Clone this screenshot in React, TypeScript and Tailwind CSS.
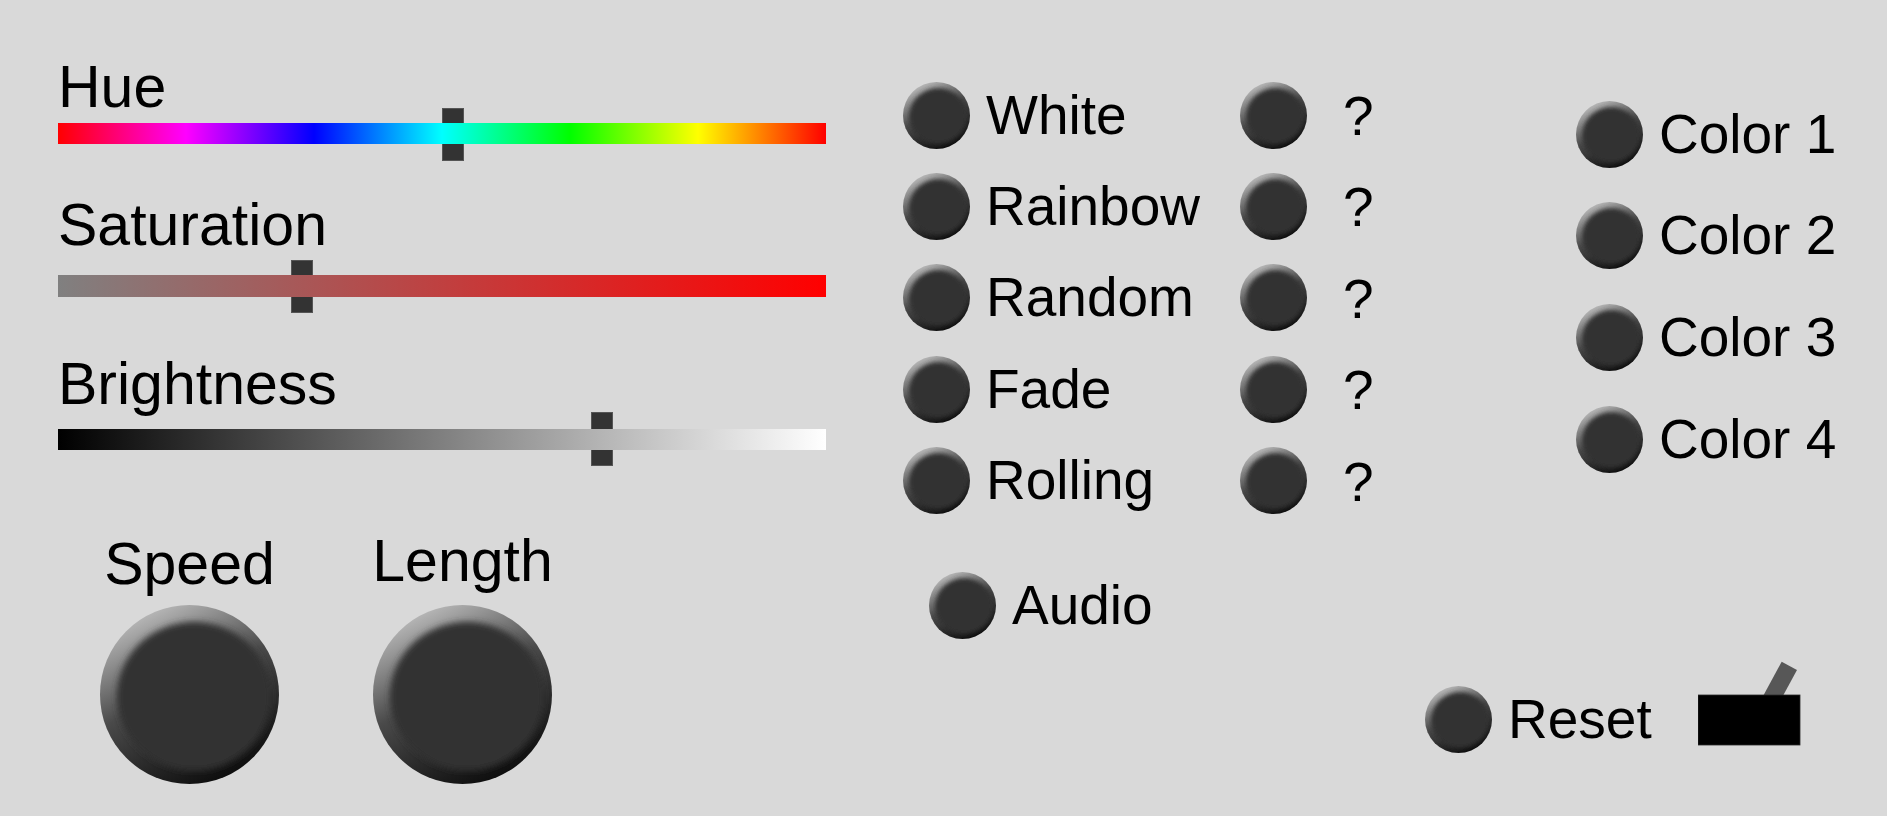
import { useId } from 'react'

const FONT = "font-['Liberation_Sans',Arial,sans-serif]"

const MODES = ['White', 'Rainbow', 'Random', 'Fade', 'Rolling']
const COLORS = ['Color 1', 'Color 2', 'Color 3', 'Color 4']

// round dark push button / knob, rim lit from the top left
function Knob({ className, blur = 1.8 }: { className: string; blur?: number }) {
  const id = useId().replace(/[^a-zA-Z0-9]/g, '')
  return (
    <svg viewBox="0 0 100 100" className={`${className} shrink-0`}>
      <defs>
        <linearGradient id={`${id}rim`} x1="0.25" y1="0" x2="0.75" y2="1">
          <stop offset="0" stopColor="#c2c2c2" />
          <stop offset="0.45" stopColor="#4a4a4a" />
          <stop offset="1" stopColor="#080808" />
        </linearGradient>
        <filter id={`${id}soft`} x="-20%" y="-20%" width="140%" height="140%">
          <feGaussianBlur stdDeviation={blur} />
        </filter>
        <clipPath id={`${id}clip`}>
          <circle cx="50" cy="50" r="50" />
        </clipPath>
      </defs>
      <circle cx="50" cy="50" r="50" fill={`url(#${id}rim)`} />
      <g clipPath={`url(#${id}clip)`}>
        <ellipse cx="52.5" cy="51" rx="43" ry="41.5" fill="#333333" filter={`url(#${id}soft)`} />
      </g>
    </svg>
  )
}

function Slider({
  label,
  labelClass,
  trackClass,
  barClass,
  thumbClass,
}: {
  label: string
  labelClass: string
  trackClass: string
  barClass: string
  thumbClass: string
}) {
  return (
    <div className="flex flex-col">
      <div className={`h-[41px] text-[59px] leading-[41px] text-black ${labelClass}`}>{label}</div>
      <div className={`relative ${trackClass}`}>
        <div className={`absolute top-0 bottom-0 w-[22px] border border-[#555] bg-[#333] ${thumbClass}`} />
        <div className={`relative z-10 w-full ${barClass}`} />
      </div>
    </div>
  )
}

function ButtonRow({ label, className = '', labelClass = '' }: { label: string; className?: string; labelClass?: string }) {
  return (
    <div className={`flex items-center ${className}`}>
      <Knob className="h-[67px] w-[67px]" blur={3} />
      <span className={`ml-[16px] text-[55px] leading-none text-black ${labelClass}`}>{label}</span>
    </div>
  )
}

function Toggle() {
  return (
    <svg viewBox="0 0 104 124" className="ml-[46px] h-[124px] w-[104px] shrink-0">
      <g transform="translate(83.7 3.7) rotate(28.5)">
        <rect x="0" y="0" width="17.4" height="52" fill="#575757" />
      </g>
      <rect x="0" y="37" width="102" height="50" fill="#000" stroke="#2a2a2a" strokeWidth="0.8" />
    </svg>
  )
}

export default function App() {
  return (
    <div className={`flex h-[816px] w-full overflow-hidden bg-[#d9d9d9] ${FONT}`}>
      <div className="flex w-[826px] shrink-0 flex-col pt-[67px] pl-[58px]">
        <Slider
          label="Hue"
          labelClass=""
          trackClass="pt-[15px] pb-[17px]"
          barClass="h-[21px] bg-[linear-gradient(to_right,#ff0000,#ff00ff,#0000ff,#00ffff,#00ff00,#ffff00,#ff0000)]"
          thumbClass="left-[384px]"
        />
        <Slider
          label="Saturation"
          labelClass="mt-[44px]"
          trackClass="mt-[14px] pt-[15px] pb-[16px]"
          barClass="h-[22px] bg-[linear-gradient(to_right,#808080,#ff0000)]"
          thumbClass="left-[233px]"
        />
        <Slider
          label="Brightness"
          labelClass="mt-[51px]"
          trackClass="mt-[7px] pt-[17px] pb-[16px]"
          barClass="h-[21px] bg-[linear-gradient(to_right,#000000,#ffffff)]"
          thumbClass="left-[533px]"
        />

        <div className="mt-[75px] flex items-end gap-[94px] pl-[42px]">
          <div className="flex w-[179px] flex-col items-center">
            <div className="h-[41px] text-[59px] leading-[41px] text-black">Speed</div>
            <Knob className="mt-[20px] h-[179px] w-[179px]" />
          </div>
          <div className="flex w-[179px] flex-col items-center">
            <div className="h-[41px] text-[59px] leading-[41px] text-black">Length</div>
            <Knob className="mt-[23px] h-[179px] w-[179px]" />
          </div>
        </div>
      </div>

      <div className="ml-[77px] flex w-[522px] shrink-0 flex-col pt-[81.5px]">
        <div className="flex flex-col gap-[24.4px]">
          {MODES.map((mode) => (
            <div key={mode} className="flex items-center">
              <ButtonRow label={mode} labelClass="w-[254px]" />
              <Knob className="h-[67px] w-[67px]" blur={3} />
              <span className="mt-[3px] ml-[36px] text-[55px] leading-none text-black">?</span>
            </div>
          ))}
        </div>
        <ButtonRow label="Audio" className="mt-[57.5px] ml-[26px]" />
      </div>

      <div className="flex flex-1 flex-col pt-[100.5px]">
        <div className="flex flex-col gap-[34.8px] pl-[151px]">
          {COLORS.map((c) => (
            <ButtonRow key={c} label={c} />
          ))}
        </div>
        <div className="mt-[185px] flex items-center">
          <ButtonRow label="Reset" />
          <Toggle />
        </div>
      </div>
    </div>
  )
}
